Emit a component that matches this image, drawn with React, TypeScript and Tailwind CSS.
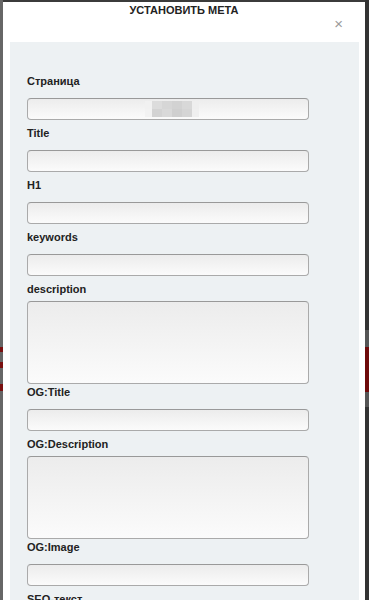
import React from "react";

const FIELDS: { label: string; area?: boolean; blurred?: boolean }[] = [
  { label: "Страница", blurred: true },
  { label: "Title" },
  { label: "H1" },
  { label: "keywords" },
  { label: "description", area: true },
  { label: "OG:Title" },
  { label: "OG:Description", area: true },
  { label: "OG:Image" },
  { label: "SEO-текст" },
];

const MOSAIC = [
  ["#f1f1f1", "#dcdcdc", "#d6d6d6", "#d2d2d2", "#d8d8d8", "#eeeeee"],
  ["#f2f2f2", "#d3d3d3", "#d9d9d9", "#cfcfcf", "#d5d5d5", "#efefef"],
];

const controlBase =
  "w-[282px] shrink-0 rounded-[4px] border border-[#aaaaaa] border-t-[#999999] bg-gradient-to-b from-[#ececec] to-[#fbfbfb]";

function Field({
  label,
  area,
  blurred,
  afterArea,
}: {
  label: string;
  area?: boolean;
  blurred?: boolean;
  afterArea?: boolean;
}) {
  return (
    <div className="flex shrink-0 flex-col">
      <label
        className={`${afterArea ? "mt-0" : "mt-[5px]"} h-4 shrink-0 text-[11px] leading-4 font-bold text-[#222]`}
      >
        {label}
      </label>
      {area ? (
        <textarea className={`mt-1 h-[83px] resize-none ${controlBase}`} />
      ) : blurred ? (
        <div className={`mt-[9px] h-[22px] pt-[2px] pl-[117px] ${controlBase}`}>
          <div className="flex flex-col">
            {MOSAIC.map((row, i) => (
              <div key={i} className="flex">
                {row.map((c, j) => (
                  <span
                    key={j}
                    className={j === 0 || j === 5 ? "h-2 w-[7px]" : "h-2 w-[10px]"}
                    style={{ backgroundColor: c }}
                  />
                ))}
              </div>
            ))}
          </div>
        </div>
      ) : (
        <input className={`mt-[9px] h-[22px] ${controlBase}`} />
      )}
    </div>
  );
}

export default function App() {
  return (
    <div className="flex h-[600px] w-[369px] overflow-hidden bg-[#3b3b3b] font-['Liberation_Sans',Arial,sans-serif]">
      {/* backdrop, left edge */}
      <div className="flex w-[3px] shrink-0 flex-col bg-[#666]">
        <div className="mt-[347px] h-[5px] bg-[#7a1010]" />
        <div className="mt-[10px] h-[6px] bg-[#7a1010]" />
        <div className="mt-[16px] h-[7px] bg-[#7a1010]" />
      </div>

      {/* modal */}
      <div className="mt-[2px] flex w-[362px] shrink-0 flex-col overflow-hidden bg-white">
        <div className="flex h-[40px] shrink-0 flex-col">
          <h2 className="mt-px h-[14px] text-center text-[11px] leading-[14px] font-bold text-[#222]">
            УСТАНОВИТЬ МЕТА
          </h2>
          <div className="flex justify-end pr-[22px]">
            <button className="mt-[1px] text-[15px] leading-[12px] text-[#9a9a9a]">×</button>
          </div>
        </div>
        <div className="ml-[7px] flex w-[349px] flex-1 flex-col bg-[#edf1f3] pt-[26px] pl-[17px]">
          {FIELDS.map((f, i) => (
            <Field key={f.label} {...f} afterArea={i > 0 && !!FIELDS[i - 1].area} />
          ))}
        </div>
      </div>

      {/* backdrop, right edge */}
      <div className="flex w-[4px] shrink-0 flex-col bg-[#333]">
        <div className="mt-[330px] h-[17px] bg-[#555]" />
        <div className="h-[45px] bg-[#6e0a0a]" />
        <div className="h-[15px] bg-[#555]" />
      </div>
    </div>
  );
}
